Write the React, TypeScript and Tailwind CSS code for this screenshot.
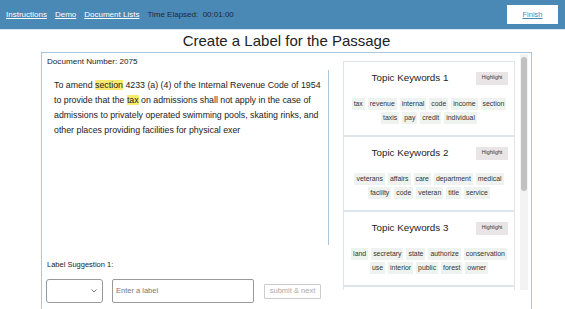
import React from "react";

const topics = [
  { title: "Topic Keywords 1", rows: [["tax", "revenue", "internal", "code", "income", "section"], ["taxis", "pay", "credit", "individual"]] },
  { title: "Topic Keywords 2", rows: [["veterans", "affairs", "care", "department", "medical"], ["facility", "code", "veteran", "title", "service"]] },
  { title: "Topic Keywords 3", rows: [["land", "secretary", "state", "authorize", "conservation"], ["use", "interior", "public", "forest", "owner"]] },
  { title: "Topic Keywords 4", rows: [["a"], ["b"]] },
];

function Card({ t }: { t: (typeof topics)[number] }) {
  return (
    <div className="border border-[#dde4ea] bg-white h-[75px] shrink-0 flex flex-col">
      <div className="flex items-center h-[30px] pt-[2px]">
        <div className="flex-1 text-center text-[9.8px] text-[#222]">{t.title}</div>
        <div className="w-[32px] h-[13px] bg-[#e9e4e5] text-[5.3px] text-[#333] flex items-center justify-center mr-[6px]">Highlight</div>
      </div>
      <div className="flex flex-col items-center gap-[2px] mt-[6px]">
        {t.rows.map((r, i) => (
          <div key={i} className="flex gap-[3px]">
            {r.map((w) => (
              <span key={w} className="bg-[#eef3f0] text-[6.9px] text-[#333] px-[2px] leading-[12px]">{w}</span>
            ))}
          </div>
        ))}
      </div>
    </div>
  );
}

export default function App() {
  return (
    <div className="w-[565px] h-[309px] overflow-hidden bg-white text-[#222]" style={{ fontFamily: '"Liberation Sans", Arial, sans-serif' }}>
      <div className="h-[30px] bg-[#4a88b5] border-b border-[#d8e6f0] flex items-center pl-[6px] pr-[7px] text-[8px]">
        <a className="underline text-white mr-[8px]">Instructions</a>
        <a className="underline text-white mr-[8px]">Demo</a>
        <a className="underline text-white mr-[8px]">Document Lists</a>
        <span className="text-[#1d2a35]">Time Elapsed:&nbsp; 00:01:00</span>
        <div className="flex-1" />
        <div className="w-[51px] h-[19px] bg-white flex items-center justify-center text-[7.5px] underline text-[#4a88b5]">Finish</div>
      </div>
      <div className="text-center text-[15px] leading-[22px] text-[#222] pl-[8px]">Create a Label for the Passage</div>
      <div className="ml-[41px] w-[491px] h-[300px] border border-[#a9c6dc] flex">
        <div className="w-[287px] flex flex-col">
          <div className="text-[8.1px] pl-[5px] pt-[3px] leading-[12px]">Document Number: 2075</div>
          <div className="h-[175px] border-r border-[#a9c6dc] mt-[2px] pl-[12px] pr-[6px] pt-[8px] text-[8.8px] leading-[15px] text-[#222]">
            To amend <span className="bg-[#fbea6e]">section</span> 4233 (a) (4) of the Internal Revenue Code of 1954 to provide that the <span className="bg-[#fbea6e]">tax</span> on admissions shall not apply in the case of admissions to privately operated swimming pools, skating rinks, and other places providing facilities for physical exer
          </div>
          <div className="text-[7.5px] pl-[5px] mt-[14px] leading-[12px]">Label Suggestion 1:</div>
          <div className="flex items-center mt-[8px] pl-[4px]">
            <div className="w-[57px] h-[24px] border border-[#999] rounded-[3px] flex items-center justify-end pr-[5px]">
              <svg width="6" height="4" viewBox="0 0 6 4"><path d="M0.5 0.5 L3 3 L5.5 0.5" fill="none" stroke="#666" strokeWidth="0.9" /></svg>
            </div>
            <div className="w-[142px] h-[24px] border border-[#999] rounded-[2px] ml-[9px] flex items-center pl-[3px] text-[7.5px] text-[#777]">Enter a label</div>
            <div className="ml-[10px] w-[57px] h-[15px] border border-[#ccc] rounded-[1px] flex items-center justify-center text-[7.5px] text-[#aaa]">submit &amp; next</div>
          </div>
        </div>
        <div className="ml-[14px] mt-[1px] h-[236px] flex">
          <div className="w-[172px] flex flex-col overflow-hidden pt-[7px]">
            {topics.map((t) => (
              <Card key={t.title} t={t} />
            ))}
          </div>
          <div className="ml-[5px] w-[8px] h-full bg-[#f3f3f3] flex justify-center pt-[3px]">
            <div className="w-[6px] h-[134px] bg-[#c1c1c1] rounded-[3px]" />
          </div>
        </div>
      </div>
    </div>
  );
}
